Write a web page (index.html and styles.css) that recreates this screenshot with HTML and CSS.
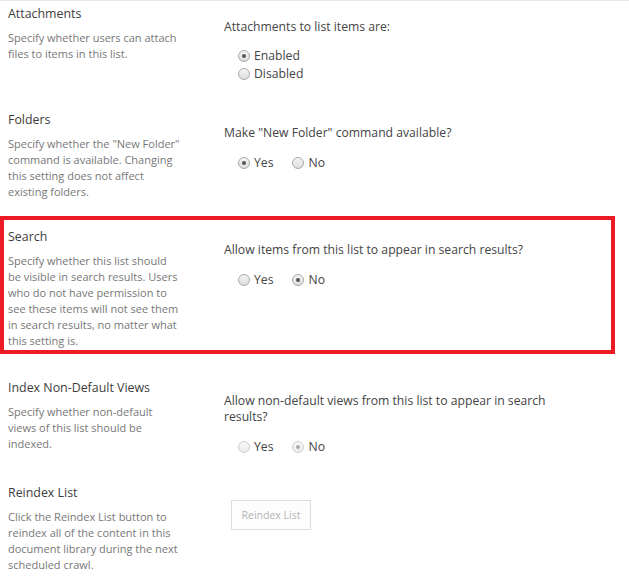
FILE: index.html
```html
<!DOCTYPE html>
<html lang="en">
<head>
<meta charset="utf-8">
<title>List Advanced Settings</title>
<link rel="stylesheet" href="styles.css">
</head>
<body>
<div class="settings">
  <section class="setting">
    <div class="setting-info">
      <h3 class="setting-title">Attachments</h3>
      <p class="setting-desc">Specify whether users can attach files to items in this list.</p>
    </div>
    <div class="setting-control">
      <p class="prompt">Attachments to list items are:</p>
      <div class="options options-stacked">
        <label class="option"><input type="radio" name="att" checked><span>Enabled</span></label>
        <label class="option"><input type="radio" name="att"><span>Disabled</span></label>
      </div>
    </div>
  </section>

  <section class="setting">
    <div class="setting-info">
      <h3 class="setting-title">Folders</h3>
      <p class="setting-desc">Specify whether the "New Folder" command is available. Changing this setting does not affect existing folders.</p>
    </div>
    <div class="setting-control">
      <p class="prompt">Make "New Folder" command available?</p>
      <div class="options options-inline">
        <label class="option"><input type="radio" name="fold" checked><span>Yes</span></label>
        <label class="option"><input type="radio" name="fold"><span>No</span></label>
      </div>
    </div>
  </section>

  <section class="setting setting-highlighted">
    <div class="setting-info">
      <h3 class="setting-title">Search</h3>
      <p class="setting-desc">Specify whether this list should be visible in search results. Users who do not have permission to see these items will not see them in search results, no matter what this setting is.</p>
    </div>
    <div class="setting-control">
      <p class="prompt">Allow items from this list to appear in search results?</p>
      <div class="options options-inline">
        <label class="option"><input type="radio" name="search"><span>Yes</span></label>
        <label class="option"><input type="radio" name="search" checked><span>No</span></label>
      </div>
    </div>
    <div class="highlight-box"></div>
  </section>

  <section class="setting">
    <div class="setting-info">
      <h3 class="setting-title">Index Non-Default Views</h3>
      <p class="setting-desc">Specify whether non-default views of this list should be indexed.</p>
    </div>
    <div class="setting-control">
      <p class="prompt">Allow non-default views from this list to appear in search results?</p>
      <div class="options options-inline">
        <label class="option"><input type="radio" name="views" disabled><span>Yes</span></label>
        <label class="option"><input type="radio" name="views" checked disabled><span>No</span></label>
      </div>
    </div>
  </section>

  <section class="setting">
    <div class="setting-info">
      <h3 class="setting-title">Reindex List</h3>
      <p class="setting-desc">Click the Reindex List button to reindex all of the content in this document library during the next scheduled crawl.</p>
    </div>
    <div class="setting-control">
      <button class="btn" type="button" disabled>Reindex List</button>
    </div>
  </section>
</div>
</body>
</html>
```

FILE: styles.css
```css
html, body {
  margin: 0;
  padding: 0;
  background: #ffffff;
}

body {
  font-family: "Open Sans", "Noto Sans", sans-serif;
  color: #444444;
}

.settings {
  border-top: 1px solid #e6e6e6;
  padding-top: 4px;
}

.setting {
  position: relative;
  display: grid;
  grid-template-columns: 224px 340px;
  padding-bottom: 28px;
}

.setting-highlighted {
  padding-bottom: 30px;
}

.setting-info {
  padding-left: 8px;
}

.setting-title {
  margin: 0 0 7px;
  font-size: 12.4px;
  line-height: 18px;
  font-weight: 400;
  color: #3d3d3d;
}

.setting-desc {
  margin: 0;
  width: 172px;
  font-size: 11px;
  line-height: 16px;
  color: #777777;
}

.setting-control {
  padding-top: 14px;
}

.prompt {
  margin: 0 0 12px;
  font-size: 12.2px;
  line-height: 16px;
  color: #444444;
}

.options {
  padding-left: 14px;
  font-size: 12.2px;
}

.options-stacked {
  display: flex;
  flex-direction: column;
  line-height: 18px;
}

.options-inline {
  display: flex;
  gap: 19px;
  line-height: 19px;
}

.option {
  display: flex;
  align-items: center;
  gap: 4px;
  color: #444444;
}

.option input {
  appearance: none;
  -webkit-appearance: none;
  margin: 0;
  width: 12px;
  height: 12px;
  border-radius: 50%;
  border: 1px solid #a9a9a9;
  background: linear-gradient(#f4f4f4, #dedede);
  box-sizing: border-box;
  display: grid;
  place-items: center;
}

.option input:checked::after {
  content: "";
  width: 4px;
  height: 4px;
  border-radius: 50%;
  background: #555555;
}

.option input:disabled {
  border-color: #cfcfcf;
  background: linear-gradient(#f8f8f8, #ececec);
}

.option input:disabled:checked::after {
  background: #a8a8a8;
}

.btn {
  margin: 2px 0 0 7px;
  width: 80px;
  height: 30px;
  border: 1px solid #dddddd;
  background: #fdfdfd;
  color: #b4b4b4;
  font-family: "Open Sans", "Noto Sans", sans-serif;
  font-size: 10.5px;
  padding: 0;
}

.highlight-box {
  position: absolute;
  left: 0;
  top: -12px;
  width: 615px;
  height: 138px;
  box-sizing: border-box;
  border: 4px solid #ed1c24;
  pointer-events: none;
}
```
